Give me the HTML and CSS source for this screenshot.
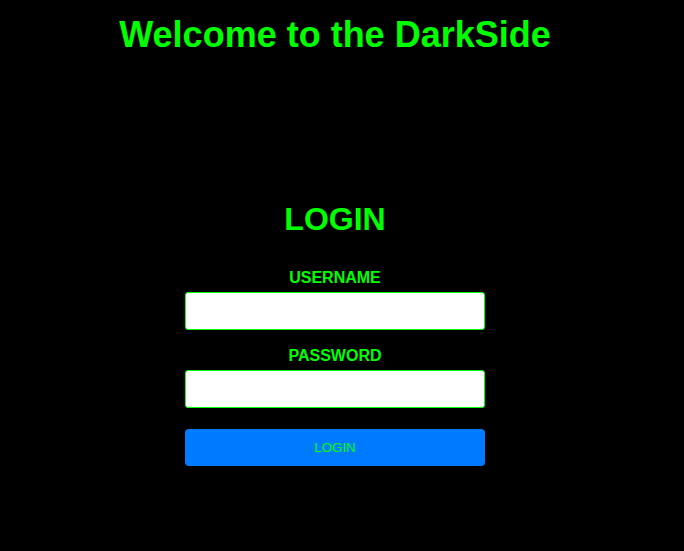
FILE: index.html
```html
<!DOCTYPE html>
<html>
<head>
<meta charset="utf-8">
<link rel="stylesheet" href="styles.css">
</head>
<body>
<div class="page">
  <h1 class="title">Welcome to the DarkSide</h1>
  <form class="login">
    <h2 class="login-title">LOGIN</h2>
    <label class="label" for="u">USERNAME</label>
    <input class="field" id="u" type="text">
    <label class="label label-pw" for="p">PASSWORD</label>
    <input class="field field-pw" id="p" type="password">
    <button class="btn" type="button">LOGIN</button>
  </form>
</div>
</body>
</html>
```
FILE: styles.css
```css
html, body {
  margin: 0;
  padding: 0;
  background: #000;
}
body {
  font-family: "Liberation Sans", Arial, sans-serif;
  color: #00ff00;
}
.page {
  width: 670px;
  display: flex;
  flex-direction: column;
  align-items: center;
}
.title {
  margin: 14px 0 0;
  font-size: 36px;
  font-weight: bold;
  color: #00ff00;
}
.login {
  width: 300px;
  margin-top: 145px;
  display: flex;
  flex-direction: column;
  align-items: center;
}
.login-title {
  margin: 0;
  font-size: 32px;
  font-weight: bold;
}
.label {
  margin-top: 31px;
  font-size: 16px;
  font-weight: bold;
  line-height: 18.4px;
}
.label-pw {
  margin-top: 17px;
}
.field {
  box-sizing: border-box;
  width: 300px;
  height: 38px;
  margin: 5px 0 0;
  border: 1px solid #00ff00;
  border-radius: 3px;
  background: #fff;
  padding: 0 8px;
}
.field-pw {
  margin-top: 4px;
}
.btn {
  box-sizing: border-box;
  width: 300px;
  height: 37px;
  margin-top: 21px;
  border: none;
  border-radius: 4px;
  background: #007bff;
  color: #00ff00;
  font-family: "Liberation Sans", Arial, sans-serif;
  font-size: 13.333px;
}
```
